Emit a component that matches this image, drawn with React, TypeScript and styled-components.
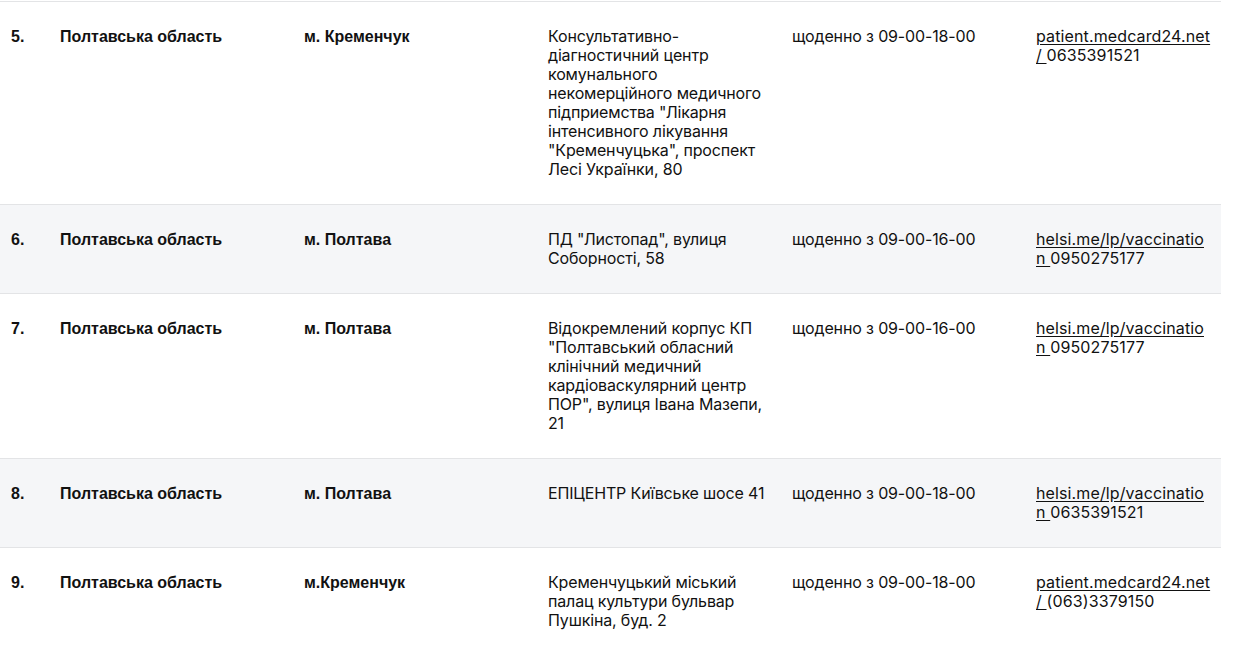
import styled, { createGlobalStyle } from 'styled-components'

const GlobalStyle = createGlobalStyle`
	body {
		margin: 0;
		background: #fff;
		font-family: Inter, 'Noto Sans', sans-serif;
		color: #000;
	}
`

const Table = styled.table`
	width: 1221px;
	margin-top: 1px;
	border-collapse: collapse;
	table-layout: fixed;
	border-top: 1px solid #e3e4e6;
`

const Row = styled.tr<{ $shaded?: boolean }>`
	background: ${(p) => (p.$shaded ? '#f5f6f8' : '#fff')};
	border-bottom: 1px solid #e3e4e6;
`

const Cell = styled.td<{ $bold?: boolean; $width: number }>`
	box-sizing: border-box;
	width: ${(p) => p.$width}px;
	padding: 25px 11px;
	vertical-align: top;
	font-family: ${(p) => (p.$bold ? "'Liberation Sans', Arial, sans-serif" : "Inter, 'Noto Sans', sans-serif")};
	font-weight: ${(p) => (p.$bold ? 700 : 400)};
	font-size: 16px;
	line-height: 19px;
	letter-spacing: ${(p) => (p.$bold ? '0' : '-0.15px')};
	color: #111;
	overflow-wrap: anywhere;
`

const LinkCell = styled(Cell)`
	padding-right: 9.5px;
	letter-spacing: 0.12px;
`

const Link = styled.a`
	color: #111;
	text-decoration: underline;
	text-underline-offset: 2px;
`

type Entry = {
	n: string
	city: string
	address: string
	hours: string
	link: string
	phone: string
}

const rows: Entry[] = [
	{
		n: '5.',
		city: 'м. Кременчук',
		address:
			'Консультативно-діагностичний центр комунального некомерційного медичного підприемства "Лікарня інтенсивного лікування "Кременчуцька", проспект Лесі Українки, 80',
		hours: 'щоденно з 09-00-18-00',
		link: 'patient.medcard24.net/ ',
		phone: '0635391521',
	},
	{
		n: '6.',
		city: 'м. Полтава',
		address: 'ПД "Листопад", вулиця Соборності, 58',
		hours: 'щоденно з 09-00-16-00',
		link: 'helsi.me/lp/vaccination ',
		phone: '0950275177',
	},
	{
		n: '7.',
		city: 'м. Полтава',
		address:
			'Відокремлений корпус КП "Полтавський обласний клінічний медичний кардіоваскулярний центр ПОР", вулиця Івана Мазепи, 21',
		hours: 'щоденно з 09-00-16-00',
		link: 'helsi.me/lp/vaccination ',
		phone: '0950275177',
	},
	{
		n: '8.',
		city: 'м. Полтава',
		address: 'ЕПІЦЕНТР Київське шосе 41',
		hours: 'щоденно з 09-00-18-00',
		link: 'helsi.me/lp/vaccination ',
		phone: '0635391521',
	},
	{
		n: '9.',
		city: 'м.Кременчук',
		address: 'Кременчуцький міський палац культури бульвар Пушкіна, буд. 2',
		hours: 'щоденно з 09-00-18-00',
		link: 'patient.medcard24.net/ ',
		phone: '(063)3379150',
	},
]

export default function App() {
	return (
		<>
			<GlobalStyle />
			<Table>
				<tbody>
					{rows.map((r, i) => (
						<Row key={r.n} $shaded={i % 2 === 1}>
							<Cell $bold $width={49}>{r.n}</Cell>
							<Cell $bold $width={244}>Полтавська область</Cell>
							<Cell $bold $width={244}>{r.city}</Cell>
							<Cell $width={244}>{r.address}</Cell>
							<Cell $width={244}>{r.hours}</Cell>
							<LinkCell $width={196}>
								<Link href='#'>{r.link}</Link>
								{r.phone}
							</LinkCell>
						</Row>
					))}
				</tbody>
			</Table>
		</>
	)
}
